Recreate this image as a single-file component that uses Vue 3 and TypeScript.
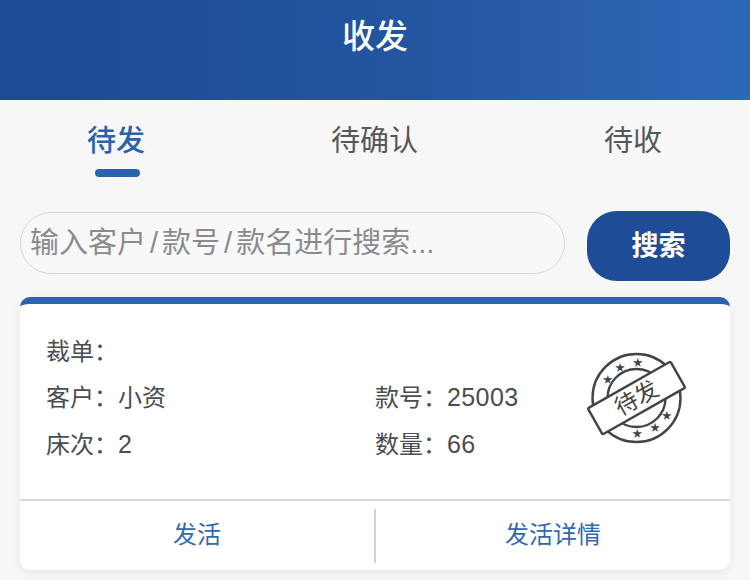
<script setup lang="ts">
const tabs: { label: string; active: boolean }[] = [
  { label: '待发', active: true },
  { label: '待确认', active: false },
  { label: '待收', active: false },
]
const stars: [number, number][] = [
  [34.7, 33.3], [47, 21.3], [64.7, 16.3], [64.3, 87.3], [82, 81.3], [93.7, 69],
]
</script>

<template>
  <div class="page">
    <header class="top">收发</header>
    <nav class="tabs">
      <div v-for="t in tabs" :key="t.label" class="tab" :class="{ active: t.active }">
        <span>{{ t.label }}</span>
        <i v-if="t.active" class="mark"></i>
      </div>
    </nav>
    <div class="search">
      <div class="input">输入客户<span class="sl">/</span>款号<span class="sl">/</span>款名进行搜索...</div>
      <button class="btn">搜索</button>
    </div>
    <section class="card">
      <div class="body">
        <div class="row"><span>裁单：</span></div>
        <div class="row">
          <span class="col">客户：小资</span>
          <span>款号：<span class="num">25003</span></span>
        </div>
        <div class="row">
          <span class="col">床次：<span class="num">2</span></span>
          <span>数量：<span class="num">66</span></span>
        </div>
        <svg class="stamp" width="120" height="110" viewBox="0 0 120 110">
          <circle cx="63.5" cy="52" r="44" fill="none" stroke="#444" stroke-width="2.4" />
          <circle cx="63.5" cy="52" r="29" fill="none" stroke="#444" stroke-width="2.4" />
          <text
            v-for="(s, i) in stars"
            :key="i"
            :x="s[0]"
            :y="s[1] + 3.5"
            class="star"
            text-anchor="middle"
          >★</text>
          <g transform="rotate(-29.5 63.5 52)">
            <rect x="16" y="37" width="95" height="30" rx="1.5" fill="#fff" stroke="#444" stroke-width="2.4" />
            <text x="63.5" y="60" class="stamp-text" text-anchor="middle">待发</text>
          </g>
        </svg>
      </div>
      <div class="foot">
        <div class="act">发活</div>
        <i class="sep"></i>
        <div class="act">发活详情</div>
      </div>
    </section>
  </div>
</template>

<style scoped>
.page {
  width: 750px;
  height: 580px;
  overflow: hidden;
  background: #f7f7f8;
  font-family: "Liberation Sans", "Noto Sans CJK SC", sans-serif;
}
.top {
  height: 100px;
  box-sizing: border-box;
  padding-top: 14px;
  text-align: center;
  font-size: 33px;
  font-weight: 500;
  line-height: 46px;
  color: #fff;
  background: linear-gradient(90deg, #1c4a94 0%, #22549f 50%, #2f68b7 100%);
}
.tabs {
  display: flex;
  justify-content: space-between;
  height: 97px;
  padding: 0 88px 0 87px;
  box-sizing: border-box;
}
.tab {
  display: flex;
  flex-direction: column;
  align-items: center;
  padding-top: 21px;
  font-size: 29px;
  line-height: 40px;
  color: #55585c;
}
.tab.active {
  color: #2a62ae;
  font-weight: 500;
}
.mark {
  width: 45px;
  height: 8px;
  margin-top: 8px;
  margin-left: 2px;
  border-radius: 4px;
  background: #2a62ae;
}
.search {
  display: flex;
  align-items: flex-start;
  padding: 14px 20px 0;
  gap: 22px;
  height: 100px;
  box-sizing: border-box;
}
.input {
  width: 545px;
  height: 62px;
  margin-top: 1px;
  box-sizing: border-box;
  border: 1px solid #d6d6d8;
  border-radius: 31px;
  padding-left: 9px;
  background: #f8f8f9;
  font-size: 29px;
  line-height: 60px;
  color: #8b8b8e;
  white-space: nowrap;
}
.sl {
  padding: 0 4px;
}
.btn {
  width: 143px;
  height: 70px;
  padding: 0 0 5px;
  border: none;
  border-radius: 30px;
  background: #1f4c96;
  color: #fff;
  font: inherit;
  font-size: 27px;
  font-weight: 700;
}
.card {
  position: relative;
  width: 710px;
  height: 273px;
  margin-left: 20px;
  box-sizing: border-box;
  border-top: 7px solid #2d62ae;
  border-radius: 10px;
  background: #fff;
  box-shadow: 0 3px 10px rgba(0, 0, 0, 0.06);
}
.body {
  position: relative;
  height: 197px;
  box-sizing: border-box;
  padding: 22px 26px 0;
  border-bottom: 2px solid #d9d9db;
}
.row {
  display: flex;
  height: 46.5px;
  align-items: center;
  font-size: 24px;
  color: #4a4d52;
}
.col {
  width: 329px;
}
.num {
  font-size: 25px;
  letter-spacing: 0.4px;
}
.stamp {
  position: absolute;
  left: 553px;
  top: 42px;
}
.star {
  font-size: 10px;
  fill: #444;
}
.stamp-text {
  font-size: 23px;
  fill: #444;
}
.foot {
  display: flex;
  align-items: center;
  height: 69px;
}
.act {
  flex: 1;
  padding-bottom: 6px;
  text-align: center;
  font-size: 24px;
  color: #3368ad;
}
.sep {
  width: 2px;
  height: 54px;
  background: #d4d4d6;
}
</style>
